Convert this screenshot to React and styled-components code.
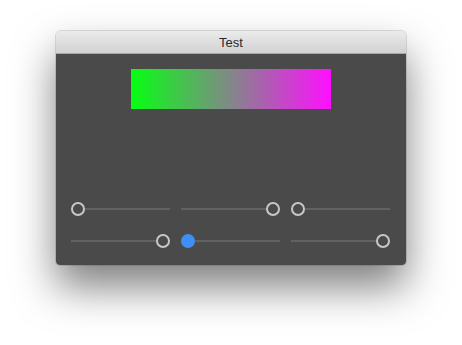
import React from "react";
import styled, { createGlobalStyle } from "styled-components";

const GlobalStyle = createGlobalStyle`
  html, body {
    margin: 0;
    background: #ffffff;
    font-family: "Liberation Sans", Arial, sans-serif;
  }
`;

const Page = styled.div`
  padding: 31px 0 0 56px;
  height: 345px;
  box-sizing: border-box;
`;

const Window = styled.div`
  width: 350px;
  border-radius: 5px 5px 4px 4px;
  overflow: hidden;
  box-shadow: 0 22px 42px rgba(0, 0, 0, 0.5), 0 0 0 1px rgba(0, 0, 0, 0.12);
`;

const TitleBar = styled.div`
  height: 21px;
  padding-top: 1px;
  display: flex;
  align-items: center;
  justify-content: center;
  background: linear-gradient(#ebebeb, #d2d2d2);
  border-bottom: 1px solid #a8a8a8;
  font-size: 13px;
  color: #2a2a2a;
`;

const Body = styled.div`
  background: #4a4a4a;
  padding: 15px 15px 17px;
  display: flex;
  flex-direction: column;
  align-items: center;
`;

const GradientBar = styled.div`
  width: 200px;
  height: 40px;
  background: linear-gradient(to right, #06ff12, #ff0fff);
`;

const Sliders = styled.div`
  margin-top: 93px;
  display: grid;
  grid-template-columns: repeat(3, 100px);
  column-gap: 10px;
  row-gap: 18px;
`;

const SliderRow = styled.div`
  height: 14px;
  padding-right: 1px;
  display: flex;
  align-items: center;
`;

const Track = styled.div`
  flex: ${(p) => p.$grow} 1 0;
  height: 2px;
  background: #626262;
`;

const Thumb = styled.div`
  width: 14px;
  height: 14px;
  box-sizing: border-box;
  border-radius: 50%;
  flex: none;
  border: ${(p) => (p.$active ? "none" : "2px solid #c8c8c8")};
  background: ${(p) => (p.$active ? "#3d8ff4" : "#4a4a4a")};
`;

const Slider = ({ value, active }) => (
  <SliderRow>
    <Track $grow={value} />
    <Thumb $active={active} />
    <Track $grow={1 - value} />
  </SliderRow>
);

const sliders = [
  { value: 0 },
  { value: 1 },
  { value: 0 },
  { value: 1 },
  { value: 0, active: true },
  { value: 1 },
];

export default function App() {
  return (
    <>
      <GlobalStyle />
      <Page>
        <Window>
          <TitleBar>Test</TitleBar>
          <Body>
            <GradientBar />
            <Sliders>
              {sliders.map((s, i) => (
                <Slider key={i} value={s.value} active={s.active} />
              ))}
            </Sliders>
          </Body>
        </Window>
      </Page>
    </>
  );
}
